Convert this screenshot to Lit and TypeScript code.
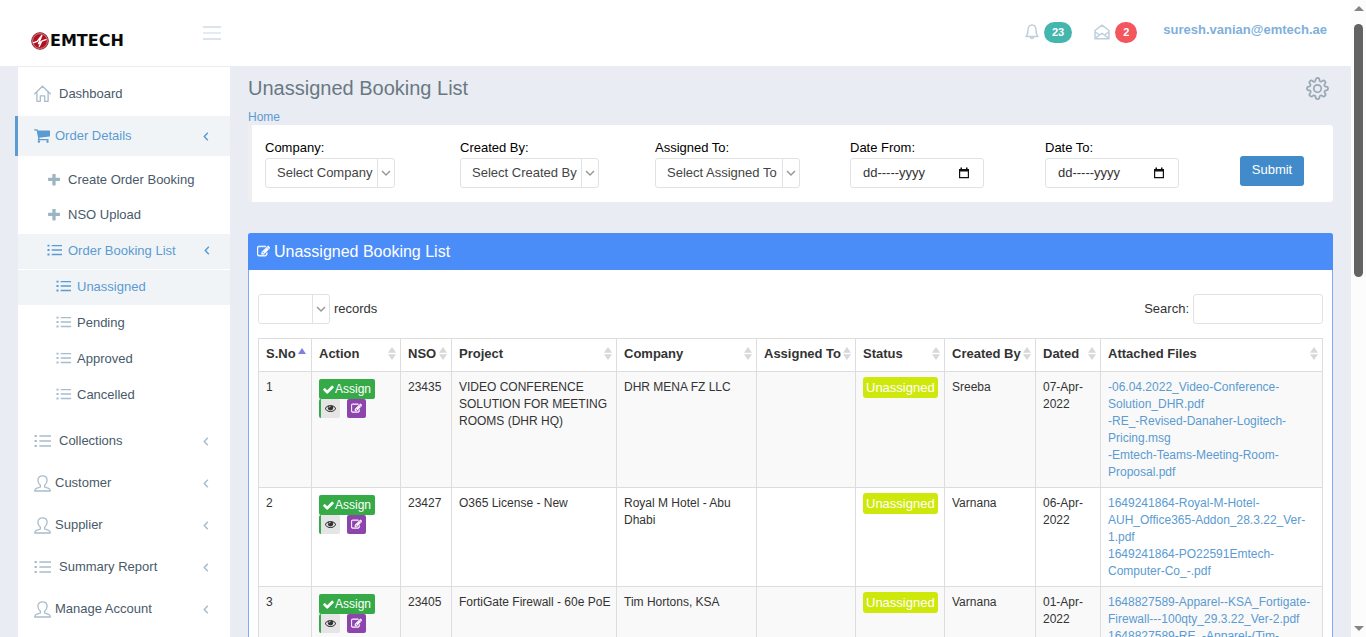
import { LitElement, html, css, svg, nothing } from "lit";
import { customElement, property } from "lit/decorators.js";
import { classMap } from "lit/directives/class-map.js";

const solid = (d: string) => svg`<path fill="currentColor" d=${d}></path>`;

const ICONS: Record<string, { box: string; art: unknown }> = {
  check: {
    box: "100 100 1600 1600",
    art: solid("M1671 566q0 40-28 68l-724 724-136 136q-28 28-68 28t-68-28l-136-136-362-362q-28-28-28-68t28-68l136-136q28-28 68-28t68 28l294 295 656-657q28-28 68-28t68 28l136 136q28 28 28 68z"),
  },
  plus: {
    box: "192 192 1408 1408",
    art: solid("M1600 736v192q0 40-28 68t-68 28h-416v416q0 40-28 68t-68 28h-192q-40 0-68-28t-28-68v-416h-416q-40 0-68-28t-28-68v-192q0-40 28-68t68-28h416v-416q0-40 28-68t68-28h192q40 0 68 28t28 68v416h416q40 0 68 28t28 68z"),
  },
  eye: {
    box: "0 64 1792 1792",
    art: solid("M1664 960q-152-236-381-353 61 104 61 225 0 185-131.5 316.5t-316.5 131.5-316.5-131.5-131.5-316.5q0-121 61-225-229 117-381 353 133 205 333.5 326.5t434.5 121.5 434.5-121.5 333.5-326.5zm-720-384q0-20-14-34t-34-14q-125 0-214.5 89.5t-89.5 214.5q0 20 14 34t34 14 34-14 14-34q0-86 61-147t147-61q20 0 34-14t14-34zm848 384q0 34-20 69-140 230-376.5 368.5t-499.5 138.5-499.5-139-376.5-368q-20-35-20-69t20-69q140-229 376.5-368t499.5-139 499.5 139 376.5 368q20 35 20 69z"),
  },
  edit: {
    box: "0 0 1792 1792",
    art: svg`<path fill="currentColor" stroke="currentColor" stroke-width="70" d="M888 1184l116-116-152-152-116 116v56h96v96h56zm440-720q-16-16-33 1l-350 350q-17 17-1 33t33-1l350-350q17-17 1-33zm80 594v190q0 119-84.5 203.5t-203.5 84.5h-832q-119 0-203.5-84.5t-84.5-203.5v-832q0-119 84.5-203.5t203.5-84.5h832q63 0 117 25 15 7 18 23 3 17-9 29l-49 49q-14 14-32 8-23-6-45-6h-832q-66 0-113 47t-47 113v832q0 66 47 113t113 47h832q66 0 113-47t47-113v-126q0-13 9-22l64-64q15-15 35-7t20 29zm-96-738l288 288-672 672h-288v-288zm444 132l-92 92-288-288 92-92q28-28 68-28t68 28l152 152q28 28 28 68t-28 68z"></path>`,
  },
  cart: {
    box: "64 128 1664 1664",
    art: solid("M704 1536q0 52-38 90t-90 38-90-38-38-90 38-90 90-38 90 38 38 90zm896 0q0 52-38 90t-90 38-90-38-38-90 38-90 90-38 90 38 38 90zm128-1088v512q0 24-16.5 42.5t-40.5 21.5l-1044 122q13 60 13 70 0 16-24 64h920q26 0 45 19t19 45-19 45-45 19h-1024q-26 0-45-19t-19-45q0-11 8-31.5t16-36 21.5-40 15.5-29.5l-177-823h-204q-26 0-45-19t-19-45 19-45 45-19h256q16 0 28.5 6.5t19.5 15.5 13 24.5 8 26 5.5 29.5 4.5 26h1201q26 0 45 19t19 45z"),
  },
  home: {
    box: "0 0 17 17",
    art: svg`<path fill="none" stroke="currentColor" stroke-width="1.300" stroke-linejoin="round" stroke-linecap="round" d="M.7 8.700 8.500 1.200l7.800 7.500M2.900 7v9.300h3.400v-5.400h4.400v5.400h3.400V7"></path>`,
  },
  list: {
    box: "0 0 16 16",
    art: svg`<path fill="none" stroke="currentColor" stroke-width="1.500" d="M5 2.800H16M5 7.500H16M5 12.200H16"></path><path fill="none" stroke="currentColor" stroke-width="2" d="M.5 2.800h2.200M.5 7.500h2.200M.5 12.200h2.200"></path>`,
  },
  user: {
    box: "0 0 17 17",
    art: svg`<path fill="none" stroke="currentColor" stroke-width="1.300" stroke-linejoin="round" d="M6.400 10.200C5 9.100 3.900 7.400 3.900 5.300 3.900 2.500 5.700.8 8.500.8s4.600 1.700 4.600 4.500c0 2.100-1.100 3.800-2.500 4.900v1.800l4 1.400c1.100.4 1.700 1.100 1.700 2.600H.7c0-1.500.6-2.200 1.700-2.600l4-1.400z"></path>`,
  },
  angle: {
    box: "0 0 6 9",
    art: svg`<path fill="none" stroke="currentColor" stroke-width="1.500" d="M4.800.8 1.300 4.500 4.800 8.200"></path>`,
  },
  down: {
    box: "0 0 10 10",
    art: svg`<path fill="none" stroke="currentColor" stroke-width="1.500" d="M1 3l4 4 4-4"></path>`,
  },
  bell: {
    box: "0 0 14 16",
    art: svg`<path fill="none" stroke="currentColor" stroke-width="1.500" stroke-linejoin="round" d="M1 12.400c1.500-1.200 1.900-2.900 1.900-6C2.900 3.200 4.500 1 7 1s4.100 2.200 4.100 5.400c0 3.100.4 4.800 1.900 6zM5.400 12.600c0 1.300.6 2 1.600 2s1.600-.7 1.600-2"></path>`,
  },
  mail: {
    box: "0 0 16 16",
    art: svg`<path fill="none" stroke="currentColor" stroke-width="1.500" stroke-linejoin="round" d="M1 6.500 8 1.200l7 5.300v8.300H1zM1.200 8l4.300 3M14.800 8l-4.300 3M1.300 14.400 5.500 11 8 9.300l2.500 1.700 4.200 3.400"></path>`,
  },
  gear: {
    box: "0 0 24 24",
    art: svg`<g fill="none" stroke="currentColor" stroke-width="1.800"><circle cx="12" cy="12" r="3.900"></circle><path stroke-linejoin="round" d="M19.400 15a1.650 1.650 0 0 0 .33 1.820l.06.06a2 2 0 0 1-2.830 2.830l-.06-.06a1.650 1.650 0 0 0-2.820 1.170V21a2 2 0 0 1-4 0v-.09A1.650 1.650 0 0 0 9 19.400a1.650 1.650 0 0 0-1.820.33l-.06.06a2 2 0 0 1-2.830-2.830l.06-.06A1.650 1.650 0 0 0 3.090 14H3a2 2 0 0 1 0-4h.09A1.650 1.650 0 0 0 4.600 9a1.650 1.650 0 0 0-.33-1.820l-.06-.06a2 2 0 0 1 2.830-2.830l.06.06A1.650 1.650 0 0 0 10 3.090V3a2 2 0 0 1 4 0v.09a1.650 1.650 0 0 0 2.820 1.170l.06-.06a2 2 0 0 1 2.830 2.830l-.06.06A1.650 1.650 0 0 0 20.910 10H21a2 2 0 0 1 0 4h-.09a1.650 1.650 0 0 0-1.510 1z"></path></g>`,
  },
  calendar: {
    box: "0 0 12 12",
    art: svg`<path fill="none" stroke="currentColor" stroke-width="1.200" d="M1.600 2.600h8.800v8H1.600z"></path><path fill="currentColor" d="M1 2h10v2.400H1zM2.500.5H4V3H2.500zM8 .5h1.500V3H8z"></path>`,
  },
  sort: {
    box: "0 0 8 13",
    art: solid("M4 0l4 5.700H0zM4 13l4-5.700H0z"),
  },
  sortUp: {
    box: "0 0 8 13",
    art: solid("M4 1l4 6H0z"),
  },
  logo: {
    box: "0 0 18 18",
    art: svg`<circle cx="9" cy="9" r="8.300" fill="#b01020" stroke="#8f2530" stroke-width="1"></circle><circle cx="9" cy="9" r="7.400" fill="none" stroke="#e6b8bc" stroke-width=".6"></circle><path fill="none" stroke="#fff" stroke-width="1.400" stroke-linejoin="round" d="M2 10.800 6.200 9.400l4.600-5.900-3.300 8.200 3.200-2.500-2.600 5.600M10.700 9.200l4.800-1.800"></path>`,
  },
};

const icon = (name: string, cls = "") =>
  html`<svg class="icon ${cls}" viewBox=${ICONS[name].box} aria-hidden="true">${ICONS[name].art}</svg>`;

const base = css`
  *,
  *::before,
  *::after {
    box-sizing: border-box;
  }
  a {
    text-decoration: none;
    color: #5b9bd1;
  }
  button,
  input,
  select {
    font: inherit;
    margin: 0;
  }
  .icon {
    display: block;
    flex: none;
  }
`;

@customElement("top-bar")
export class TopBar extends LitElement {
  static styles = [
    base,
    css`
      :host {
        display: flex;
        align-items: center;
        height: 66px;
        background: #fff;
        padding: 0 24px 0 31px;
      }
      .brand {
        display: flex;
        align-items: center;
        gap: 1px;
        width: 172px;
        padding-top: 15px;
        color: #0a0a0a;
        font: bold 16px/18px "DejaVu Sans", sans-serif;
      }
      .brand .icon {
        width: 18px;
        height: 18px;
      }
      .toggle {
        width: 18px;
        height: 14px;
        padding: 0;
        border: solid #dbe4ee;
        border-width: 2px 0;
        background: linear-gradient(#e4ebf3, #e4ebf3) center / 100% 2px no-repeat;
      }
      .tools {
        display: flex;
        align-items: center;
        margin-left: auto;
        padding-bottom: 2px;
      }
      .notice {
        display: flex;
        align-items: center;
        gap: 5px;
        margin-right: 22px;
        color: #c0cfdd;
      }
      .bell {
        width: 14px;
        height: 16px;
      }
      .mail {
        width: 16px;
        height: 16px;
      }
      .count {
        border-radius: 11px;
        padding: 0 8px;
        color: #fff;
        background: #44b6ae;
        font-size: 11px;
        font-weight: bold;
        line-height: 21px;
      }
      .red {
        background: #f3565d;
      }
      .user {
        margin-left: 4px;
        color: #7fb0da;
        font-weight: bold;
        padding-bottom: 4px;
      }
    `,
  ];

  render() {
    return html`
      <a class="brand" href="#">${icon("logo")}<span>EMTECH</span></a>
      <button class="toggle" aria-label="Toggle menu"></button>
      <div class="tools">
        <a class="notice" href="#" aria-label="Notifications">${icon("bell", "bell")}<span class="count">23</span></a>
        <a class="notice" href="#" aria-label="Messages">${icon("mail", "mail")}<span class="count red">2</span></a>
        <a class="user" href="#">suresh.vanian@emtech.ae</a>
      </div>
    `;
  }
}

interface MenuEntry {
  label: string;
  icon: string;
  wide?: boolean;
  arrow?: boolean;
  active?: boolean;
  children?: MenuEntry[];
}

const MENU: MenuEntry[] = [
  { label: "Dashboard", icon: "home", wide: true },
  {
    label: "Order Details",
    icon: "cart",
    arrow: true,
    active: true,
    children: [
      { label: "Create Order Booking", icon: "plus" },
      { label: "NSO Upload", icon: "plus" },
      {
        label: "Order Booking List",
        icon: "list",
        arrow: true,
        active: true,
        children: [
          { label: "Unassigned", icon: "list", active: true },
          { label: "Pending", icon: "list" },
          { label: "Approved", icon: "list" },
          { label: "Cancelled", icon: "list" },
        ],
      },
    ],
  },
  { label: "Collections", icon: "list", wide: true, arrow: true },
  { label: "Customer", icon: "user", arrow: true },
  { label: "Supplier", icon: "user", arrow: true },
  { label: "Summary Report", icon: "list", wide: true, arrow: true },
  { label: "Manage Account", icon: "user", arrow: true },
];

@customElement("side-menu")
export class SideMenu extends LitElement {
  static styles = [
    base,
    css`
      :host {
        display: block;
        background: #fff;
      }
      ul {
        list-style: none;
        margin: 0;
        padding: 0;
      }
      .item {
        display: flex;
        align-items: center;
        color: #485a6a;
      }
      .item .icon {
        color: #a7bdcd;
      }
      .l0 {
        height: 42px;
        padding: 0 21px 0 16px;
      }
      .l0 .glyph {
        width: 17px;
        height: 17px;
        margin-right: 4px;
      }
      .l0 .cart {
        width: 16px;
        height: 16px;
        margin-right: 5px;
      }
      .l0.wide .glyph {
        margin-right: 8px;
      }
      .first {
        height: 49px;
        padding-top: 4px;
      }
      .l1 {
        height: 35px;
        padding: 0 20px 0 29px;
      }
      .l1 .glyph {
        width: 15px;
        height: 15px;
        margin-right: 6px;
      }
      .l1 .plus {
        width: 12px;
        height: 12px;
        margin: 0 8px 0 1px;
        color: #9cb5c3;
      }
      .l2 {
        height: 35px;
        margin-top: 1px;
        padding: 0 0 2px 38px;
      }
      .l2 .glyph {
        width: 15px;
        height: 15px;
        margin-right: 6px;
      }
      .item.active,
      .item.active .icon {
        color: #5b9bd1;
      }
      .active {
        background: #f1f4f7;
      }
      .l0.active {
        height: 40px;
        margin-left: -3px;
        border-left: 3px solid #5b9bd1;
      }
      .l1.active {
        margin-top: 2px;
        padding-bottom: 2px;
      }
      .sub0 {
        padding: 6px 0 7px;
      }
      .item .angle {
        width: 6px;
        height: 9px;
        margin-left: auto;
      }
    `,
  ];

  private entry(e: MenuEntry, level: number, index: number): unknown {
    const cls = {
      item: true,
      [`l${level}`]: true,
      wide: !!e.wide,
      active: !!e.active,
      first: level === 0 && index === 0,
    };
    return html`<li>
      <a class=${classMap(cls)} href="#">
        ${icon(e.icon, `glyph ${e.icon}`)}<span>${e.label}</span>
        ${e.arrow ? icon("angle", "angle") : nothing}
      </a>
      ${e.children
        ? html`<ul class="sub${level}">${e.children.map((c, i) => this.entry(c, level + 1, i))}</ul>`
        : nothing}
    </li>`;
  }

  render() {
    return html`<nav><ul>${MENU.map((e, i) => this.entry(e, 0, i))}</ul></nav>`;
  }
}

const controls = css`
  .pick {
    display: inline-grid;
    grid-template-columns: 1fr 17px;
    height: 30px;
    border: 1px solid #e0e2e4;
    border-radius: 3px;
    background: #fff;
  }
  .pick select {
    grid-area: 1 / 1 / 2 / 3;
    appearance: none;
    border: 0;
    background: none;
    color: #444;
    padding: 0 21px 0 11px;
    outline: 0;
  }
  .pick .arrow {
    grid-area: 1 / 2;
    display: grid;
    place-items: center;
    border-left: 1px solid #e0e2e4;
    color: #999;
    pointer-events: none;
  }
  .pick .icon {
    width: 10px;
    height: 10px;
  }
`;

@customElement("booking-filter")
export class BookingFilter extends LitElement {
  static styles = [
    base,
    controls,
    css`
      :host {
        display: block;
      }
      form {
        display: grid;
        grid-template-columns: repeat(5, minmax(0, 1fr)) auto;
        padding: 14px 29px 14px 13px;
        border-left: 4px solid #eee;
        border-radius: 0 3px 3px 0;
        background: #fff;
        background-clip: padding-box;
      }
      .field {
        display: flex;
        flex-direction: column;
        align-items: flex-start;
        gap: 2px;
      }
      .field label {
        color: #000;
        line-height: 17px;
      }
      .date {
        display: flex;
        align-items: center;
        width: 134px;
        height: 30px;
        padding: 0 13px 0 12px;
        border: 1px solid #e0e2e4;
        border-radius: 3px;
      }
      .date input {
        flex: 1;
        min-width: 0;
        padding: 0;
        border: 0;
        outline: 0;
        color: #333;
        background: none;
      }
      .date input::placeholder {
        color: #333;
      }
      .date button {
        padding: 0;
        border: 0;
        background: none;
        color: #111;
      }
      .date .icon {
        width: 12px;
        height: 12px;
      }
      .submit {
        align-self: end;
        width: 64px;
        height: 30px;
        margin-bottom: 2px;
        padding: 0 0 3px;
        border: 0;
        border-radius: 3px;
        color: #fff;
        background: #428bca;
      }
    `,
  ];

  private select(id: string, label: string, option: string) {
    return html`<div class="field">
      <label for=${id}>${label}</label>
      <span class="pick"><select id=${id}><option>${option}</option></select><span class="arrow">${icon("down")}</span></span>
    </div>`;
  }

  private date(id: string, label: string) {
    return html`<div class="field">
      <label for=${id}>${label}</label>
      <span class="date"><input id=${id} type="text" placeholder="dd-----yyyy" /><button type="button" aria-label="Open calendar">${icon("calendar")}</button></span>
    </div>`;
  }

  render() {
    return html`<form>
      ${this.select("company", "Company:", "Select Company")}
      ${this.select("created", "Created By:", "Select Created By")}
      ${this.select("assigned", "Assigned To:", "Select Assigned To")}
      ${this.date("from", "Date From:")} ${this.date("to", "Date To:")}
      <button class="submit" type="button">Submit</button>
    </form>`;
  }
}

interface Booking {
  no: number;
  nso: string;
  project: string;
  company: string;
  by: string;
  dated: string;
  files: string[];
}

const BOOKINGS: Booking[] = [
  {
    no: 1,
    nso: "23435",
    project: "VIDEO CONFERENCE SOLUTION FOR MEETING ROOMS (DHR HQ)",
    company: "DHR MENA FZ LLC",
    by: "Sreeba",
    dated: "07-Apr-2022",
    files: [
      "-06.04.2022_Video-Conference-Solution_DHR.pdf",
      "-RE_-Revised-Danaher-Logitech-Pricing.msg",
      "-Emtech-Teams-Meeting-Room-Proposal.pdf",
    ],
  },
  {
    no: 2,
    nso: "23427",
    project: "O365 License - New",
    company: "Royal M Hotel - Abu Dhabi",
    by: "Varnana",
    dated: "06-Apr-2022",
    files: ["1649241864-Royal-M-Hotel-AUH_Office365-Addon_28.3.22_Ver-1.pdf", "1649241864-PO22591Emtech-Computer-Co_-.pdf"],
  },
  {
    no: 3,
    nso: "23405",
    project: "FortiGate Firewall - 60e PoE",
    company: "Tim Hortons, KSA",
    by: "Varnana",
    dated: "01-Apr-2022",
    files: ["1648827589-Apparel--KSA_Fortigate-Firewall---100qty_29.3.22_Ver-2.pdf", "1648827589-RE_-Apparel-(Tim-"],
  },
];

const COLUMNS: [string, string][] = [
  ["S.No", "c-no"],
  ["Action", "c-action"],
  ["NSO", "c-nso"],
  ["Project", "c-project"],
  ["Company", "c-company"],
  ["Assigned To", "c-assigned"],
  ["Status", "c-status"],
  ["Created By", "c-by"],
  ["Dated", "c-dated"],
  ["Attached Files", "c-files"],
];

@customElement("booking-table")
export class BookingTable extends LitElement {
  @property({ attribute: false }) rows: Booking[] = BOOKINGS;

  static styles = [
    base,
    controls,
    css`
      :host {
        display: block;
        border: 1px solid #7caaf6;
        border-top: 0;
        border-radius: 3px 3px 0 0;
        background: #fff;
      }
      .head {
        display: flex;
        align-items: center;
        gap: 4px;
        height: 37px;
        margin: 0 -1px;
        padding: 0 9px;
        border-radius: 3px 3px 0 0;
        color: #fff;
        background: #4b8df8;
      }
      .head .icon {
        width: 13px;
        height: 13px;
      }
      .head h2 {
        margin: 0;
        font-size: 16px;
        font-weight: normal;
      }
      .body {
        padding: 24px 9px;
      }
      .bar {
        display: flex;
        align-items: center;
        gap: 4px;
        margin-bottom: 14px;
      }
      .bar .pick {
        width: 72px;
      }
      .find {
        display: flex;
        align-items: center;
        gap: 4px;
        margin-left: auto;
      }
      .find input {
        width: 130px;
        height: 30px;
        border: 1px solid #e0e2e4;
        border-radius: 3px;
        outline: 0;
      }
      table {
        width: 100%;
        table-layout: fixed;
        border-collapse: collapse;
        font-size: 12px;
        line-height: 17px;
      }
      th,
      td {
        border: 1px solid #ddd;
        text-align: left;
        vertical-align: top;
      }
      th {
        padding: 6px 4px 9px 7px;
        font-size: 13px;
      }
      td {
        padding: 7px 2px 6px 7px;
      }
      tbody tr:nth-child(odd) {
        background: #f9f9f9;
      }
      .sort {
        display: flex;
        justify-content: space-between;
        align-items: center;
        width: 100%;
        padding: 0;
        border: 0;
        background: none;
        color: inherit;
        font-weight: bold;
        line-height: 17px;
        white-space: nowrap;
      }
      .sort .icon {
        width: 8px;
        height: 13px;
        color: #d8d8d8;
      }
      .c-no .icon {
        color: #8080e0;
      }
      .c-no .sort {
        justify-content: flex-start;
        gap: 2px;
      }
      .c-no { width: 53px; }
      .c-action { width: 89px; }
      .c-nso { width: 51px; }
      .c-project { width: 165px; }
      .c-company { width: 140px; }
      .c-assigned { width: 99px; }
      .c-status { width: 89px; }
      .c-by { width: 91px; }
      .c-dated { width: 65px; }
      .actions {
        display: grid;
        grid-template-columns: 28px auto;
        justify-content: start;
      }
      .actions button {
        display: flex;
        align-items: center;
        justify-content: center;
        border: 0;
        border-radius: 2px;
        color: #fff;
      }
      .assign {
        grid-column: 1 / 3;
        gap: 1px;
        height: 20px;
        padding: 0 4px;
        background: #35aa47;
      }
      .assign .icon {
        width: 11px;
        height: 11px;
      }
      .actions .view {
        width: 21px;
        height: 19px;
        padding: 0;
        border-left: 2px solid #35aa47;
        color: #333;
        background: #e5e5e5;
      }
      .edit {
        width: 19px;
        height: 19px;
        padding: 0;
        background: #8e44ad;
      }
      .view .icon,
      .edit .icon {
        width: 11px;
        height: 11px;
      }
      td.status {
        padding-top: 5px;
      }
      .badge {
        display: inline-block;
        padding: 2px 3px;
        border-radius: 3px;
        color: #fff;
        background: #cfe80c;
        font-size: 13px;
      }
      .file {
        display: block;
      }
    `,
  ];

  private row(b: Booking) {
    return html`<tr>
      <td>${b.no}</td>
      <td>
        <div class="actions">
          <button class="assign">${icon("check")}Assign</button>
          <button class="view" aria-label="View">${icon("eye")}</button>
          <button class="edit" aria-label="Edit">${icon("edit")}</button>
        </div>
      </td>
      <td>${b.nso}</td>
      <td>${b.project}</td>
      <td>${b.company}</td>
      <td></td>
      <td class="status"><span class="badge">Unassigned</span></td>
      <td>${b.by}</td>
      <td>${b.dated}</td>
      <td>${b.files.map((f) => html`<a class="file" href="#">${f}</a>`)}</td>
    </tr>`;
  }

  render() {
    return html`
      <div class="head">${icon("edit")}<h2>Unassigned Booking List</h2></div>
      <div class="body">
        <div class="bar">
          <span class="pick"><select id="size" aria-label="records"><option></option></select><span class="arrow">${icon("down")}</span></span>
          <label for="size">records</label>
          <div class="find"><label for="search">Search:</label><input id="search" type="text" /></div>
        </div>
        <table>
          <thead>
            <tr>
              ${COLUMNS.map(
                ([name, cls], i) =>
                  html`<th class=${cls}><button class="sort">${name}${icon(i ? "sort" : "sortUp")}</button></th>`
              )}
            </tr>
          </thead>
          <tbody>
            ${this.rows.map((b) => this.row(b))}
          </tbody>
        </table>
      </div>
    `;
  }
}

@customElement("app-root")
export class AppRoot extends LitElement {
  static styles = [
    base,
    css`
      :host {
        display: grid;
        grid-template-columns: minmax(0, 1fr) 15px;
        height: 100vh;
        overflow: hidden;
        background: #e9ecf3;
        color: #333;
        font: 13px/18px "Liberation Sans", Arial, sans-serif;
      }
      .page {
        display: flex;
        flex-direction: column;
        height: 100vh;
        overflow: hidden;
      }
      .columns {
        display: grid;
        grid-template-columns: 212px minmax(0, 1fr);
        gap: 18px;
        flex: 1;
        min-height: 0;
        padding: 1px 18px 0;
      }
      .title {
        display: flex;
        justify-content: space-between;
        align-items: center;
        padding: 9px 4px 0 0;
      }
      .title h1 {
        margin: 0;
        color: #697882;
        font-size: 20px;
        font-weight: normal;
        line-height: 24px;
      }
      .settings {
        padding: 0;
        border: 0;
        background: none;
        color: #9aa8b3;
      }
      .settings .icon {
        width: 23px;
        height: 23px;
      }
      .crumb {
        display: block;
        padding-top: 9px;
        font-size: 12px;
        line-height: 16px;
      }
      booking-table {
        margin-top: 31px;
      }
      .scroll {
        display: flex;
        flex-direction: column;
        align-items: center;
        padding: 6px 0;
        background: #fcfcfc;
      }
      .up,
      .down {
        border: 5px solid transparent;
        border-top-width: 0;
        border-bottom-color: #858585;
      }
      .down {
        margin-top: auto;
        transform: rotate(180deg);
      }
      .thumb {
        width: 9px;
        height: 40.5%;
        margin-top: 13px;
        border-radius: 5px;
        background: #636363;
      }
    `,
  ];

  render() {
    return html`
      <div class="page">
        <top-bar></top-bar>
        <div class="columns">
          <side-menu></side-menu>
          <main>
            <div class="title">
              <h1>Unassigned Booking List</h1>
              <button class="settings" aria-label="Settings">${icon("gear")}</button>
            </div>
            <a class="crumb" href="#">Home</a>
            <booking-filter></booking-filter>
            <booking-table></booking-table>
          </main>
        </div>
      </div>
      <div class="scroll" aria-hidden="true"><span class="up"></span><span class="thumb"></span><span class="down"></span></div>
    `;
  }
}
